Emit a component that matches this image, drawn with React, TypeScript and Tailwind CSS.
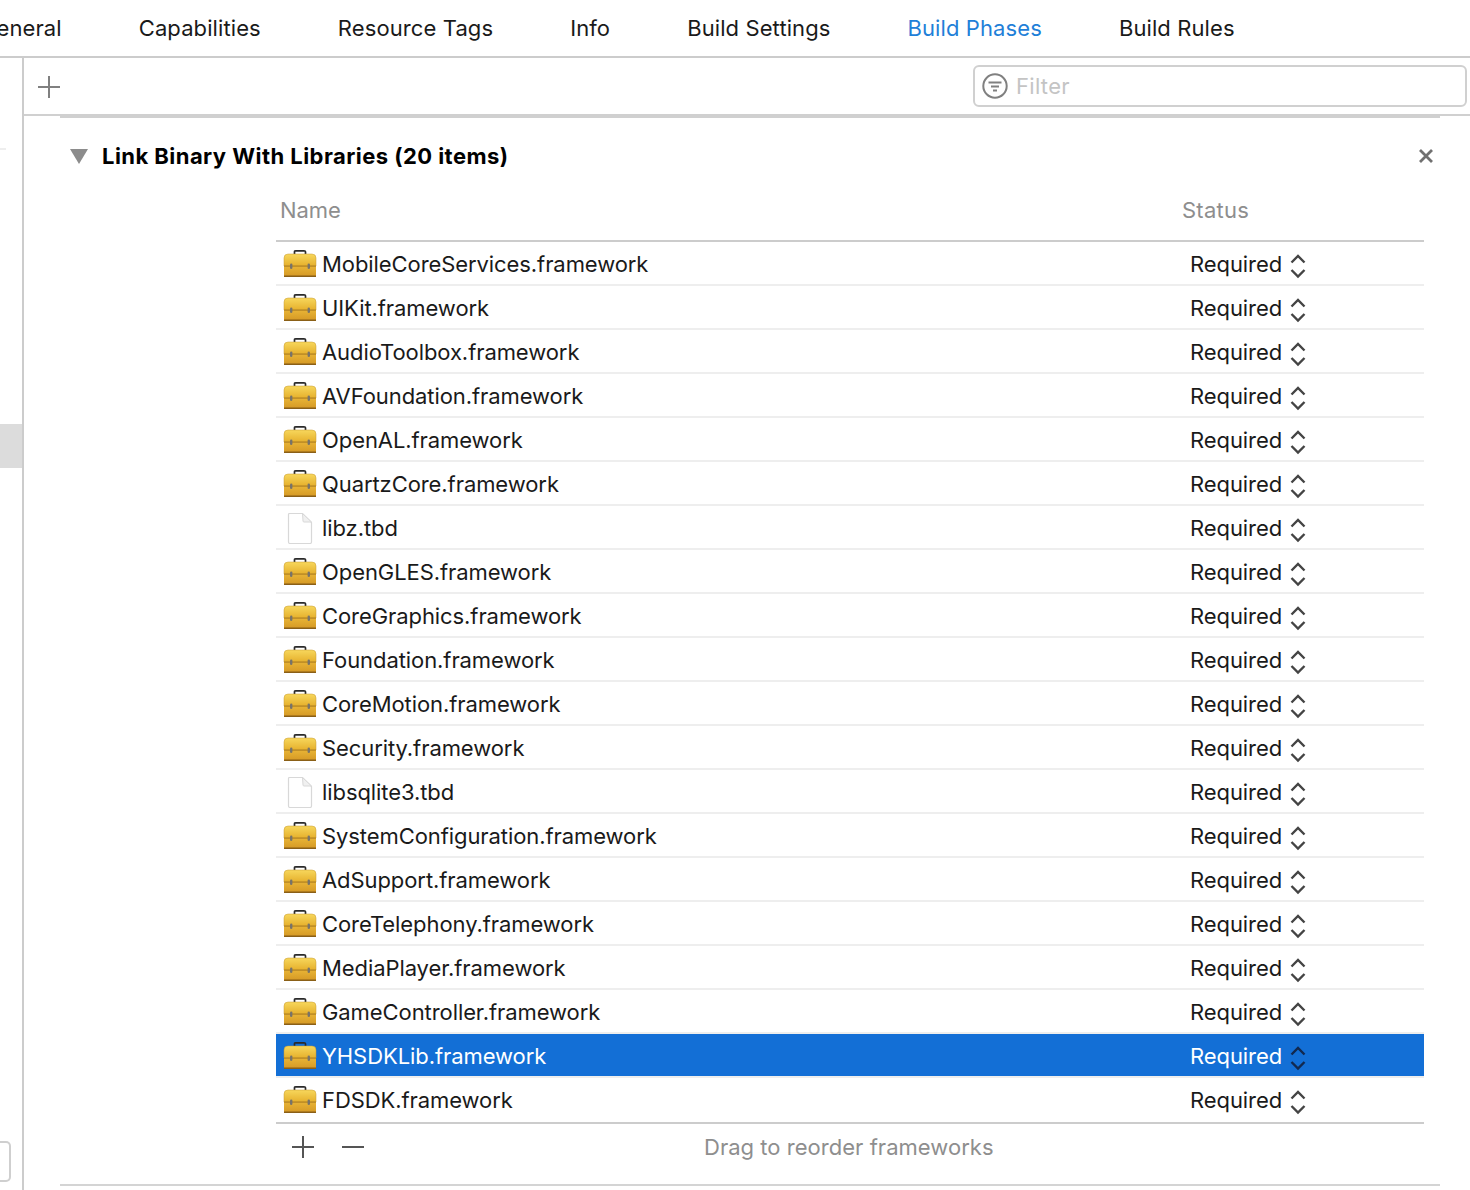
const font = { fontFamily: 'Inter, "Noto Sans", sans-serif' };

const tabs = ['General', 'Capabilities', 'Resource Tags', 'Info', 'Build Settings', 'Build Phases', 'Build Rules'];

const libs = [
  'MobileCoreServices.framework',
  'UIKit.framework',
  'AudioToolbox.framework',
  'AVFoundation.framework',
  'OpenAL.framework',
  'QuartzCore.framework',
  'libz.tbd',
  'OpenGLES.framework',
  'CoreGraphics.framework',
  'Foundation.framework',
  'CoreMotion.framework',
  'Security.framework',
  'libsqlite3.tbd',
  'SystemConfiguration.framework',
  'AdSupport.framework',
  'CoreTelephony.framework',
  'MediaPlayer.framework',
  'GameController.framework',
  'YHSDKLib.framework',
  'FDSDK.framework',
];

function Toolbox() {
  return (
    <svg width="34" height="32" viewBox="0 0 34 32" className="shrink-0">
      <defs>
        <linearGradient id="boxTop" x1="0" y1="0" x2="0" y2="1">
          <stop offset="0" stopColor="#f7d75c" />
          <stop offset="1" stopColor="#e6b02c" />
        </linearGradient>
        <linearGradient id="boxBottom" x1="0" y1="0" x2="0" y2="1">
          <stop offset="0" stopColor="#e8b436" />
          <stop offset="1" stopColor="#d69a26" />
        </linearGradient>
      </defs>
      <path d="M11.500 7 V3.800 Q11.500 2.800 13 2.800 H21 Q22.500 2.800 22.500 3.800 V7" fill="none" stroke="#2a2a2a" strokeWidth="1.700" />
      <path d="M1 10 Q1 6 5 6 H29 Q33 6 33 10 V18 H1 Z" fill="url(#boxTop)" stroke="#c79a34" strokeWidth="0.500" />
      <rect x="1" y="18" width="32" height="10" fill="url(#boxBottom)" />
      <rect x="1" y="17.600" width="32" height="1" fill="#a87a1f" />
      <rect x="1" y="27.500" width="32" height="1.500" fill="#8a5f17" />
      <rect x="7" y="15.500" width="2.400" height="5.500" rx="1.200" fill="#77736a" />
      <rect x="24.600" y="15.500" width="2.400" height="5.500" rx="1.200" fill="#77736a" />
    </svg>
  );
}

function FileIcon() {
  return (
    <svg width="34" height="32" viewBox="0 0 34 32" className="shrink-0">
      <path
        d="M6.500 1.500 H19.500 L28.500 10.500 V30 Q28.500 31.500 27 31.500 H7 Q5.500 31.500 5.500 30 V2.500 Q5.500 1.500 6.500 1.500 Z"
        fill="#ffffff"
        stroke="#d8d8d8"
        strokeWidth="1.200"
      />
      <path d="M19.500 1.500 L20 9 Q20 10 21 10 H28.500 Z" fill="#f0f0f0" stroke="#d8d8d8" strokeWidth="1" />
    </svg>
  );
}

function Stepper({ selected }: { selected: boolean }) {
  const color = selected ? '#12294f' : '#444444';
  return (
    <svg width="16" height="26" viewBox="0 0 16 26" className="shrink-0" fill="none" stroke={color} strokeWidth="2.400">
      <path d="M1.500 9.500 L8 3 L14.500 9.500" />
      <path d="M1.500 17 L8 23.500 L14.500 17" />
    </svg>
  );
}

function PlusIcon({ color }: { color: string }) {
  return (
    <svg width="24" height="24" viewBox="0 0 24 24" fill="none" stroke={color} strokeWidth="2">
      <path d="M12 1 V23 M1 12 H23" />
    </svg>
  );
}

export default function App() {
  return (
    <div
      style={font}
      className="flex h-[1190px] w-[1470px] flex-col overflow-hidden bg-white text-[22px] tracking-[-0.08px] text-[#1a1a1a]"
    >
      {/* tabs */}
      <div className="flex h-[58px] shrink-0 items-center gap-[77px] border-b-2 border-[#cccccc] tracking-[0.1px]">
        {tabs.map((tab, i) => (
          <span
            key={tab}
            className={`${i === 0 ? 'ml-[-20px]' : ''} ${tab === 'Build Phases' ? 'text-[#1f80d8]' : ''} whitespace-nowrap`}
          >
            {tab}
          </span>
        ))}
      </div>

      <div className="flex min-h-0 flex-1">
        {/* sidebar edge */}
        <div className="flex w-[24px] shrink-0 flex-col border-r-2 border-[#cccccc]">
          <div className="mt-[90px] h-[2px] w-[6px] bg-[#eeeeee]" />
          <div className="mt-[274px] h-[44px] bg-[#dcdcdc]" />
          <div className="mt-[673px] h-[41px] w-[11px] rounded-r-[5px] border-2 border-l-0 border-[#cfcfcf]" />
        </div>

        <div className="flex min-w-0 flex-1 flex-col">
          {/* toolbar */}
          <div className="flex h-[58px] shrink-0 items-center justify-between border-b-2 border-[#d0d0d0] pr-[3px] pl-[13px]">
            <div className="mt-[2px]">
              <PlusIcon color="#808080" />
            </div>
            <div className="mb-[1px] flex h-[42px] w-[494px] items-center gap-[8px] rounded-[6px] border-2 border-[#d0d0d0] pl-[7px]">
              <svg width="26" height="26" viewBox="0 0 26 26" fill="none" stroke="#808080" strokeWidth="2">
                <circle cx="13" cy="13" r="11.700" />
                <path d="M6.500 9.500 H19.500 M9 13.500 H17 M11 17.500 H15" />
              </svg>
              <span className="pt-[1px] tracking-[0.3px] text-[#c4c4c4]">Filter</span>
            </div>
          </div>

          {/* phase */}
          <div className="ml-[36px] w-[1380px] flex-1 border-t-[2px] border-[#d0d0d0]">
            <div className="flex h-[75px] items-center justify-between pr-[7px] pl-[10px] pt-[1px]">
              <div className="flex items-center gap-[14px]">
                <svg width="18" height="15" viewBox="0 0 18 15" fill="#8c8c8c">
                  <path d="M0 0 H18 L9 15 Z" />
                </svg>
                <span className="font-bold tracking-[0.45px] text-black">Link Binary With Libraries (20 items)</span>
              </div>
              <svg width="14" height="14" viewBox="0 0 14 14" stroke="#707070" strokeWidth="2.800" fill="none">
                <path d="M1 1 L13 13 M13 1 L1 13" />
              </svg>
            </div>

            <div className="ml-[216px] w-[1148px]">
              <div className="flex h-[49px] items-center border-b-2 border-[#cccccc] pb-[13px] text-[#8e8e8e]">
                <span className="ml-[4px] w-[902px]">Name</span>
                <span className="tracking-[0.25px]">Status</span>
              </div>

              {libs.map((name, i) => {
                const selected = name === 'YHSDKLib.framework';
                const last = i === libs.length - 1;
                return (
                  <div
                    key={name}
                    className={`flex items-center ${last ? 'h-[46px] border-b-2 border-[#cccccc]' : 'h-[44px] border-b-2 border-[#eeeeee] pt-[2px]'} ${selected ? 'bg-[#136fd6] text-white' : ''}`}
                  >
                    <div className="ml-[7px] flex w-[907px] items-center gap-[5px]">
                      {name.endsWith('.tbd') ? <FileIcon /> : <Toolbox />}
                      <span className="whitespace-nowrap">{name}</span>
                    </div>
                    <span>Required</span>
                    <div className="ml-[8px] mt-[4px]">
                      <Stepper selected={selected} />
                    </div>
                  </div>
                );
              })}

              <div className="flex h-[46px] items-center">
                <div className="ml-[15px] flex items-center gap-[26px]">
                  <PlusIcon color="#555555" />
                  <svg width="24" height="24" viewBox="0 0 24 24" fill="none" stroke="#555555" strokeWidth="2">
                    <path d="M1 12 H23" />
                  </svg>
                </div>
                <span className="ml-[339px] tracking-[0.03px] text-[#8e8e8e]">Drag to reorder frameworks</span>
              </div>
            </div>
            <div className="mt-[14px] h-[2px] bg-[#d4d4d4]" />
          </div>
        </div>
      </div>
    </div>
  );
}
